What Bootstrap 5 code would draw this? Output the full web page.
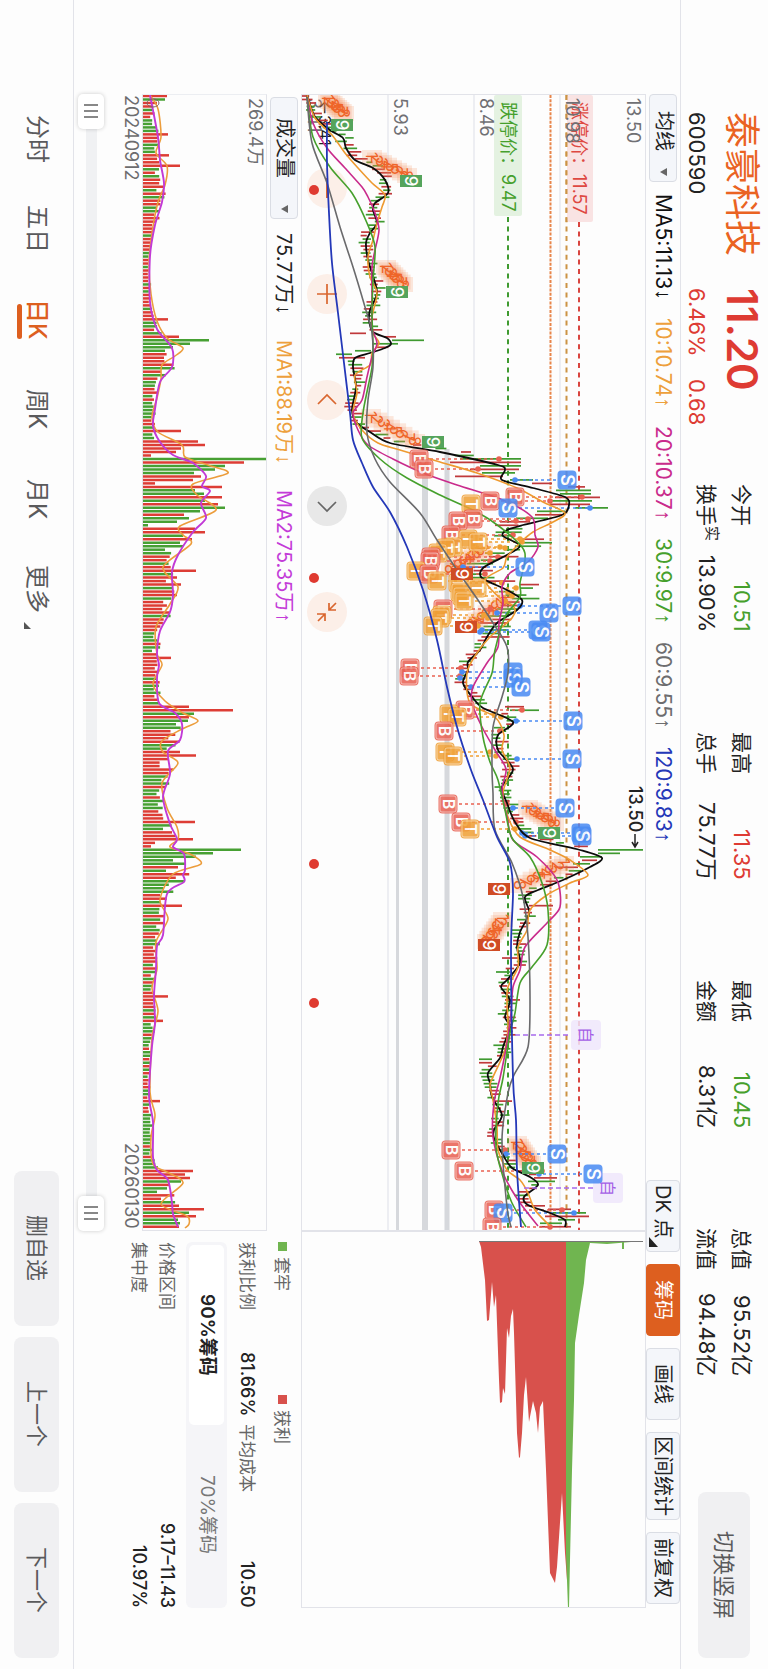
<!DOCTYPE html>
<html lang="zh-CN">
<head>
<meta charset="utf-8">
<meta name="viewport" content="width=device-width, initial-scale=1">
<title>泰豪科技 600590</title>
<link rel="stylesheet" href="https://cdn.jsdelivr.net/npm/bootstrap@5.3.0/dist/css/bootstrap.min.css">
<style>
  :root { --up:#de3b33; --down:#46a02c; --brand:#dd5f1f; --rule:#e2e3e9; --ink:#222; --soft:#5a5a5c; }
  body { background:#fdfdfd; color:var(--ink); font-family:Inter,"Noto Sans CJK SC",sans-serif; font-size:22px; line-height:1.2; }
  /* landscape screen held upright: lines run top to bottom, blocks right to left */
  .screen { writing-mode:vertical-rl; text-orientation:sideways; width:100%; min-height:100vh; white-space:nowrap; }
  .screen svg { writing-mode:horizontal-tb; display:block; }
  .screen button, .screen select { writing-mode:vertical-rl; text-orientation:sideways; font-family:inherit; }
  .up { color:var(--up); } .down { color:var(--down); }
  .arrow { font-family:"Liberation Sans",sans-serif; }

  .quote-bar { width:88px; padding:112px 8px 11px 0; border-left:1px solid var(--rule); }
  .quote { height:372px; padding-right:1px; }
  .quote-line > :first-child { height:176px; }
  .quote-line { column-gap:0; }
  .change { gap:22px; }
  .stock-name { font-size:36px; color:#ea6322; }
  .last-price { font-size:42px; font-weight:600; }
  .quote-main { width:34px; line-height:34px; }
  .quote-sub { width:28px; line-height:28px; margin-right:14px; }
  .stats { display:grid; grid-template-columns:repeat(4,148px); column-gap:100px; padding-right:3px; align-content:start; row-gap:4px; font-size:21px; }
  .stats > div { width:31px; line-height:31px; }
  .stats b { font-weight:400; font-size:22px; }
  .stats sup { font-size:15px; top:0; vertical-align:8px; line-height:0; }
  .soft-btn { background:#f0f0f2; color:var(--soft); border:0; border-radius:8px; font-size:22px; padding:0; height:155px; }
  .soft-btn:hover { background:#e6e6e9; }
  .switch-btn { width:52px; height:166px; margin:auto 10px 0 0; }

  .tool-row { width:34px; padding:94px 0 61px; }
  .pick { appearance:none; border:1px solid #dadde4; border-radius:4px; background:#f4f6fa; color:var(--ink); font-size:20px; line-height:1.2; width:28px; padding:16px 0 6px; }
  .pick-wrap::after { content:""; position:absolute; bottom:6px; left:11px; border:4px solid transparent; border-right:7px solid #666; border-left:0; pointer-events:none; }
  .ma-list { font-size:21px; height:648px; margin-top:12px; }
  .tools { gap:12px; padding-bottom:4px; }
  .tool { min-height:72px; width:34px; padding:3px 0; font-size:20px; line-height:1.2; border:1px solid #dadde4; border-radius:4px; background:#f4f6fa; color:var(--ink); }
  .tool.chosen { background:var(--brand); border-color:var(--brand); color:#fff; }
  .tool.has-menu { padding-bottom:12px; }
  .corner { position:absolute; bottom:4px; left:2px; border-bottom:10px solid #222; border-right:9px solid transparent; }

  .main { display:grid; grid-template-columns:1137fr 378fr; padding:94px 0 61px; flex:1 1 auto; min-width:0; }
  .plot { width:345px; border:1px solid var(--rule); }
  .plot svg { width:100%; height:100%; position:relative; pointer-events:none; }
  .plot text { font-family:Inter,"Noto Sans CJK SC",sans-serif; }
  .orbs { position:absolute; top:73px; left:5px; gap:66px; }
  .orb { width:40px; height:40px; border:0; padding:0; border-radius:50%; background:#fcefe8; color:#d9662e; }
  .orb.end { background:#e8e8e8; color:#666; }
  .orb svg { width:40px; height:40px; }
  .vol-row { width:34px; gap:14px; padding-top:3px; }
  .vol-row .pick { padding:20px 0 40px; }
  .vol-values { font-size:20px; gap:26px; }
  .ma-row .pick { padding:16px 0 30px; }
  .vol-plot { width:125px; border:1px solid var(--rule); border-top-color:#eceef2; }
  .dates { width:20px; line-height:20px; font-size:18px; color:#6c6c6e; margin-right:1px; padding:1px 0 2px; }

  .span-range { width:26px; margin-right:17px; }
  .span-range::before { content:""; position:absolute; inset:0 7px 0 8px; background:#f0f1f3; }
  .span-range input { position:absolute; inset:0; width:26px; height:100%; margin:0; appearance:none; background:none; writing-mode:vertical-lr; pointer-events:none; }
  .span-range input::-webkit-slider-thumb { appearance:none; pointer-events:auto; width:26px; height:35px; border:0; border-radius:5px; box-shadow:0 0 4px #0003;
    background:linear-gradient(#888,#888) 50% 10px/14px 2px no-repeat, linear-gradient(#888,#888) 50% 16px/14px 2px no-repeat, linear-gradient(#888,#888) 50% 22px/14px 2px no-repeat, #fff; }

  .chips { padding:11px 0 0; font-size:17px; color:#666; }
  .legend-row { width:28px; margin-right:5px; }
  .legend-row > span { height:153px; gap:6px; }
  .swatch { width:9px; height:9px; }
  .swatch.held { background:#70b550; } .swatch.gain { background:#d8514c; }
  .fact { width:28px; font-size:17px; }
  .fact b { font-weight:500; font-size:18px; color:#222; }
  .fact-pair { width:28px; display:grid; grid-template-columns:180fr 190fr; column-gap:8px; margin-right:7px; }
  .seg { width:41px; margin:0 6px 0 5px; padding:3px; background:#f5f5f8; border-radius:6px; }
  .seg button { flex:1 1 0; border:0; padding:0; background:none; color:#777; font-size:19px; border-radius:5px; }
  .seg button.chosen { background:#fff; color:#222; font-weight:600; }

  .foot { width:74px; border-right:1px solid var(--rule); padding:94px 0 11px; }
  .actions { gap:11px; }
  .actions .soft-btn { width:45px; }
  .period { height:90px; width:44px; font-size:24px; color:var(--soft); text-decoration:none; position:relative; }
  .period.chosen { color:var(--brand); font-weight:500; }
  .period.chosen::after { content:""; position:absolute; left:2px; top:30px; width:5px; height:35px; border-radius:3px; background:var(--brand); }
  .more::after { content:""; position:absolute; left:9px; bottom:5px; border-bottom:7px solid #555; border-right:7px solid transparent; }
</style>
</head>
<body>
<div class="screen d-flex flex-column">

  <header class="quote-bar d-flex align-items-start">
    <div class="quote d-flex flex-column">
      <div class="quote-line quote-main d-flex"><span class="stock-name">泰豪科技</span><span class="last-price up">11.20</span></div>
      <div class="quote-line quote-sub d-flex"><span>600590</span><span class="change up d-flex"><span>6.46%</span><span>0.68</span></span></div>
    </div>
    <div class="stats">
      <div class="d-flex justify-content-between"><span>今开</span><b class="down">10.51</b></div>
      <div class="d-flex justify-content-between"><span>最高</span><b class="up">11.35</b></div>
      <div class="d-flex justify-content-between"><span>最低</span><b class="down">10.45</b></div>
      <div class="d-flex justify-content-between"><span>总值</span><b>95.52亿</b></div>
      <div class="d-flex justify-content-between"><span>换手<sup>实</sup></span><b>13.90%</b></div>
      <div class="d-flex justify-content-between"><span>总手</span><b>75.77万</b></div>
      <div class="d-flex justify-content-between"><span>金额</span><b>8.31亿</b></div>
      <div class="d-flex justify-content-between"><span>流值</span><b>94.48亿</b></div>
    </div>
    <button class="soft-btn switch-btn" type="button">切换竖屏</button>
  </header>

  <div class="tool-row ma-row d-flex justify-content-between align-items-center">
    <div class="d-flex align-items-center">
      <div class="pick-wrap position-relative"><select class="pick" aria-label="主图指标"><option>均线</option></select></div>
      <div class="ma-list d-flex justify-content-between">
        <span style="color:#111">MA5:11.13<span class="arrow">↓</span></span>
        <span style="color:#eda03c">10:10.74<span class="arrow">↑</span></span>
        <span style="color:#c92b8c">20:10.37<span class="arrow">↑</span></span>
        <span style="color:#46a02c">30:9.97<span class="arrow">↑</span></span>
        <span style="color:#6d6d6f">60:9.55<span class="arrow">↑</span></span>
        <span style="color:#2438b8">120:9.83<span class="arrow">↑</span></span>
      </div>
    </div>
    <div class="tools d-flex">
      <button class="tool has-menu position-relative" type="button">DK 点<i class="corner"></i></button>
      <button class="tool chosen" type="button">筹码</button>
      <button class="tool" type="button">画线</button>
      <button class="tool" type="button">区间统计</button>
      <button class="tool" type="button">前复权</button>
    </div>
  </div>

  <main class="main">
    <section class="d-flex flex-column">
      <div class="plot position-relative">
        <div class="orbs d-flex">
          <button class="orb" type="button" aria-label="缩小"><svg viewBox="0 0 40 40"><path d="M20 10v20" stroke="currentColor" stroke-width="2"/></svg></button>
          <button class="orb" type="button" aria-label="放大"><svg viewBox="0 0 40 40"><path d="M20 10v20M10 20h20" stroke="currentColor" stroke-width="1.7"/></svg></button>
          <button class="orb" type="button" aria-label="左移"><svg viewBox="0 0 40 40"><path d="M11 24l9-9 9 9" fill="none" stroke="currentColor" stroke-width="1.7"/></svg></button>
          <button class="orb end" type="button" aria-label="右移"><svg viewBox="0 0 40 40"><path d="M11 16l9 9 9-9" fill="none" stroke="currentColor" stroke-width="1.7"/></svg></button>
          <button class="orb" type="button" aria-label="退出全屏"><svg viewBox="0 0 40 40"><path d="M29 11l-7 7m0-7v7h7M11 29l7-7m-8 0h8v7" fill="none" stroke="currentColor" stroke-width="1.7"/></svg></button>
        </div>
        <svg id="price" viewBox="302 95 343 1135"></svg>
      </div>
      <div class="vol-row d-flex align-items-center">
        <div class="pick-wrap position-relative"><select class="pick" aria-label="副图指标"><option>成交量</option></select></div>
        <div class="vol-values d-flex">
          <span>75.77万<span class="arrow">↓</span></span>
          <span style="color:#eda03c">MA1:88.19万<span class="arrow">↓</span></span>
          <span style="color:#c33bd8">MA2:75.35万<span class="arrow">↑</span></span>
        </div>
      </div>
      <div class="vol-plot"><svg id="volume" viewBox="143 95 123 1135" width="100%" height="100%"></svg></div>
      <div class="dates d-flex justify-content-between"><span>20240912</span><span>20260130</span></div>
      <div class="span-range position-relative">
        <input type="range" min="0" max="100" value="0" aria-label="起始日期">
        <input type="range" min="0" max="100" value="100" aria-label="结束日期">
      </div>
    </section>
    <section class="d-flex flex-column">
      <div class="plot"><svg id="chip" viewBox="302 1232 343 375"></svg></div>
      <div class="chips d-flex flex-column">
        <div class="legend-row d-flex">
          <span class="d-flex align-items-center"><i class="swatch held"></i>套牢</span>
          <span class="d-flex align-items-center"><i class="swatch gain"></i>获利</span>
        </div>
        <div class="fact-pair">
          <div class="fact d-flex justify-content-between align-items-center"><span>获利比例</span><b>81.66%</b></div>
          <div class="fact d-flex justify-content-between align-items-center"><span>平均成本</span><b>10.50</b></div>
        </div>
        <div class="seg d-flex"><button class="chosen" type="button">90%筹码</button><button type="button">70%筹码</button></div>
        <div class="fact d-flex justify-content-between align-items-center"><span>价格区间</span><b>9.17–11.43</b></div>
        <div class="fact d-flex justify-content-between align-items-center"><span>集中度</span><b>10.97%</b></div>
      </div>
    </section>
  </main>

  <footer class="foot d-flex justify-content-between align-items-center">
    <nav class="periods d-flex">
      <a class="period d-flex align-items-center justify-content-center" href="#">分时</a>
      <a class="period d-flex align-items-center justify-content-center" href="#">五日</a>
      <a class="period chosen d-flex align-items-center justify-content-center" href="#">日K</a>
      <a class="period d-flex align-items-center justify-content-center" href="#">周K</a>
      <a class="period d-flex align-items-center justify-content-center" href="#">月K</a>
      <a class="period more d-flex align-items-center justify-content-center" href="#">更多</a>
    </nav>
    <div class="actions d-flex">
      <button class="soft-btn" type="button">删自选</button>
      <button class="soft-btn" type="button">上一个</button>
      <button class="soft-btn" type="button">下一个</button>
    </div>
  </footer>
</div>

<script src="https://cdn.jsdelivr.net/npm/bootstrap@5.3.0/dist/js/bootstrap.bundle.min.js"></script>
<script>
const RED = '#c0393b', GREEN = '#3f9a30', STEP = 3.49, DAYS = 325;
let seed = 11;
const rnd = () => (seed = (seed * 16807) % 2147483647) / 2147483647;
const pts = s => s.trim().split(/\s+/).map(p => p.split(',').map(Number));

// Price (x) at a given time position (y), linear between samples
function at(line, y) {
  for (let i = 1; i < line.length; i++) if (line[i][1] >= y) {
    const [a, b] = [line[i - 1], line[i]];
    return a[0] + (b[0] - a[0]) * (y - a[1]) / ((b[1] - a[1]) || 1);
  }
  return line[line.length - 1][0];
}
function curve(p, color, w = 1.6) {
  let d = `M${p[0]}`;
  for (let i = 0; i < p.length - 1; i++) {
    const a = p[i - 1] || p[i], b = p[i], c = p[i + 1], e = p[i + 2] || c;
    d += `C${(b[0] + (c[0] - a[0]) / 7).toFixed(1)} ${(b[1] + (c[1] - a[1]) / 7).toFixed(1)} ${(c[0] - (e[0] - b[0]) / 7).toFixed(1)} ${(c[1] - (e[1] - b[1]) / 7).toFixed(1)} ${c}`;
  }
  return `<path d="${d}" fill="none" stroke="${color}" stroke-width="${w}"/>`;
}
const seg = (x1, x2, y, c, w = 1.3, dash = '') => `<path d="M${x1} ${y}H${x2}" stroke="${c}" stroke-width="${w}" stroke-dasharray="${dash}"/>`;
const level = (x, y1, c, w, dash = '', y2 = 1230) => `<path d="M${x} ${y1}V${y2}" stroke="${c}" stroke-width="${w}" stroke-dasharray="${dash}"/>`;
// Text that runs downwards; x is the baseline, y the start
const down = (x, y, t, size, c, extra = '') => `<text transform="translate(${x} ${y}) rotate(90)" font-size="${size}" fill="${c}" ${extra}>${t}</text>`;

const ma5 = pts(`307,95 315,117 330,130 343,138 346,148 355,160 373,168 385,180 388,193 375,203 373,210 377,223 370,233 366,243 368,260 372,273 377,293 370,310 369,320 373,332 387,338 391,344 385,348 370,353 355,358 353,367 356,387 352,410 357,423 370,432 390,443 440,452 498,465 505,470 502,480 533,488 565,497 569,505 562,515 523,525 507,530 503,536 520,546 503,557 483,568 482,578 507,590 522,600 517,610 497,623 487,637 480,650 468,662 468,670 463,683 473,698 483,708 513,722 498,735 498,750 513,769 502,787 507,803 515,822 530,838 580,850 602,858 590,867 563,880 538,890 525,897 529,910 528,917 520,932 517,947 520,963 507,980 501,987 510,1000 505,1017 510,1027 503,1047 500,1058 488,1073 490,1083 492,1097 502,1115 494,1130 494,1138 503,1155 512,1168 530,1177 538,1185 524,1197 528,1205 550,1213 565,1220 565,1227`);
const ma10 = pts(`307,95 315,118 332,135 345,153 358,168 372,183 385,195 382,207 377,223 373,240 368,257 370,277 377,293 372,317 373,333 379,343 372,353 370,365 355,375 357,393 353,413 362,430 378,443 400,450 440,462 477,473 517,488 543,502 565,513 553,522 533,532 520,543 507,557 503,568 485,580 500,598 514,607 512,618 490,637 477,653 467,673 470,703 495,717 504,735 502,750 510,768 503,793 508,817 520,837 550,850 570,860 588,875 570,883 547,895 530,910 527,930 518,947 518,967 508,987 507,1003 508,1027 505,1050 493,1077 490,1085 493,1100 497,1127 498,1150 507,1170 520,1180 528,1193 535,1210 550,1226`);
const ma20 = pts(`307,97 313,123 327,148 345,168 362,187 368,197 375,213 379,230 375,250 372,267 372,293 372,327 377,343 372,357 367,377 362,400 353,413 358,430 368,445 393,459 423,473 457,485 503,500 532,517 535,535 538,547 528,562 510,573 502,587 503,603 499,623 498,647 487,663 473,687 472,703 482,727 495,750 506,769 502,790 507,817 513,840 537,857 557,880 560,907 547,923 525,947 520,970 513,987 511,1013 507,1043 500,1078 494,1103 493,1137 503,1173 518,1200 538,1226`);
const ma30 = pts(`307,97 313,137 330,167 352,193 367,223 375,247 373,280 372,313 373,347 372,367 368,387 363,413 362,438 380,459 407,478 440,495 477,512 500,527 522,547 525,560 520,583 520,597 505,617 495,650 492,673 480,703 483,737 490,762 498,780 505,810 512,838 530,857 542,883 548,910 547,945 532,967 520,983 515,1013 510,1033 503,1078 498,1103 496,1147 503,1177 512,1203 526,1227`);
const ma60 = pts(`307,97 312,143 327,183 340,227 353,267 365,307 372,333 373,367 368,400 367,433 375,459 390,482 420,513 437,540 457,570 480,603 493,623 507,647 508,673 502,697 493,727 492,768 493,793 495,830 512,863 523,897 528,937 530,997 528,1047 514,1075 508,1093 502,1140 507,1207 511,1227`);
const ma120 = pts(`327,122 327,163 329,213 332,263 338,313 344,363 350,413 353,440 362,463 373,487 390,512 407,547 423,590 437,640 447,687 457,727 471,770 483,800 497,837 510,863 513,893 511,950 513,1078 516,1120 517,1170 521,1227`);

/* ---------- price chart ---------- */
let s = '';
[388, 474, 560].forEach(x => s += level(x, 95, '#e3e4ec', 1.2));
s += level(397.5, 440, '#d6d8dc', 3) + level(425, 455, '#d6d8dc', 6) + level(447, 449, '#d6d8dc', 5);
s += level(550.5, 95, '#e8854a', 2, '3 1.3') + level(566.5, 95, '#cc9345', 2, '5 4.4');

// price tags
s += '<rect x="494" y="95" width="28" height="121" rx="2" fill="#e4f2e1"/><rect x="567" y="95" width="26" height="127" rx="2" fill="#f9e3e3"/>';
s += level(566.5, 95, '#cc9345', 2, '5 4.4', 222);
s += level(508, 217, GREEN, 2, '5 4.4') + level(579, 222, '#d9453f', 2, '5 4.4');
s += down(502, 102, '跌停价：9.47', 18, '#46a02c') + down(573, 102, '涨停价：11.57', 18, '#de4841');
[[627, '13.50'], [566, '10.98'], [480, '8.46'], [394, '5.93'], [308, '3.41']].forEach(([x, t]) => s += down(x, 98, t, 18, '#707074'));
s += down(319, 100, '←3.41', 16, '#222');

// daily candles as low–high strokes
const candle = {};
`333,350,366,r 337,384,396,r 340,392,424,g 344,372,398,g 351,355,371,g 354,336,352,g 358,339,365,r 452,461,471,r 459,460,521,g 463,450,521,r 466,480,521,g 470,470,519,r 473,482,515,g 477,455,503,r 480,510,533,g 484,532,552,r 487,568,585,r 491,556,591,g 494,560,591,g 498,555,600,r 501,550,592,g 505,550,590,r 508,575,608,g 512,537,565,g 515,535,562,r 519,516,548,g 522,500,530,r 540,520,544,r 543,520,552,g 586,520,539,r 589,520,533,g 669,456,468,r 708,505,524,r 711,510,539,g 850,598,643,g 853,598,620,g 857,580,602,g 861,582,597,r 864,573,590,g 868,555,578,r 906,529,553,r 959,502,520,r 973,496,510,g 1000,505,520,r 1060,479,492,g 1063,479,492,r 1101,495,512,r 1178,534,557,r 1182,528,555,g 1206,525,545,r 1210,548,571,r 1213,550,586,g 1217,545,589,r 1220,558,575,g 1223,540,562,g 1227,540,571,r`
  .split(/\s+/).forEach(r => { const [y, a, b, c] = r.split(','); candle[Math.round((y - 96) / STEP)] = [+a, +b, c]; });
for (let i = 0; i < DAYS; i++) {
  const y = 96 + i * STEP, m = at(ma5, y), trend = at(ma5, y + 3) - at(ma5, y - 3);
  const big = y > 450 && y < 640, c = candle[i];
  const mid = m + trend * .5 + (rnd() - .5) * (big ? 22 : 8), half = (big ? 6 : 3) + rnd() * (big ? 9 : 4);
  const up = rnd() < .5;
  s += c ? seg(c[0], c[1], y, c[2] === 'r' ? RED : GREEN, 1.7) : seg((mid - half).toFixed(1), (mid + half).toFixed(1), y, up ? RED : GREEN, 1.7);
}

// nine-turn counters
const counts = [[325,98,341,112],[369,156,404,174],[383,266,400,283],[368,415,412,440],[480,548,448,568],[504,597,470,622],[525,806,551,822],[561,862,517,884],[500,918,484,940],[514,1142,528,1162]];
counts.forEach(([x1, y1, x2, y2]) => {
  for (let i = 0; i < 8; i++) {
    const x = x1 + (x2 - x1) * i / 7, y = y1 + (y2 - y1) * i / 7;
    s += `<rect x="${(x - 7).toFixed(1)}" y="${(y - 6).toFixed(1)}" width="20" height="15" fill="#f58a55" opacity=".2"/>`;
  }
  for (let i = 0; i < 8; i++) s += down((x1 + (x2 - x1) * i / 7 - 3).toFixed(1), (y1 + (y2 - y1) * i / 7 - 4).toFixed(1), i + 1, 16, '#ef6428');
});

// trade marks: letter, badge x, y, dot x
const marks = `B,419,459,499 B,424,469,478 S,567,480,515 T,471,504,0 B,515,497,582 B,490,501,550 S,508,508,590 B,473,519,528 B,458,521,516 B,451,535,513 T,468,539,520 T,478,542,522 T,453,547,500 T,446,548,505 T,438,553,490 B,431,557,498 B,430,561,490 T,416,571,0 B,429,574,485 T,437,581,484 S,525,567,463 T,458,583,502 T,477,588,516 T,460,592,508 T,462,596,512 T,464,601,505 B,443,609,490 T,442,615,484 T,440,618,488 T,433,626,478 S,549,613,497 S,572,606,520 S,538,630,482 S,541,632,480 B,410,668,461 B,409,676,460 S,513,672,462 S,513,678,460 S,521,687,471 B,465,710,522 T,449,714,495 T,457,717,501 S,573,721,516 B,444,731,500 T,445,752,490 T,453,756,496 S,572,759,517 B,448,804,507 S,565,808,513 B,461,822,516 T,470,829,515 S,581,833,522 S,582,836,525 B,451,1150,505 S,557,1154,506 B,464,1171,542 B,494,1210,562 S,503,1213,574 B,492,1227,550 S,593,1174,539`.split(/\s+/).map(r => r.split(','));
const tone = { B: '#e96152', S: '#4a8bf3', T: '#f0a036' };
marks.forEach(([k, x, y, dot]) => {
  if (+dot) s += seg(+x + (+dot > +x ? 11 : -11), dot, y, tone[k], 1.5, '3 3') + `<circle cx="${dot}" cy="${y}" r="2.8" fill="${tone[k]}"/>`;
});
const badge = ([k, x, y]) => `<g opacity=".86"><rect x="${x - 9.5}" y="${y - 9.5}" width="19" height="19" rx="4" fill="${tone[k]}"/>` +
  (k === 'S' ? '' : `<rect x="${x - 8}" y="${y - 8}" width="16" height="16" rx="2" fill="none" stroke="#fff" stroke-opacity=".5"/>`) +
  down(x - (k === 'S' ? 6.5 : 5.5), y, k, k === 'S' ? 18 : 16, '#fff', 'text-anchor="middle" font-weight="600"') + '</g>';
s += curve(ma5, '#0c0c0c', 1.8) + curve(ma10, '#ee9a30') + curve(ma20, '#c92b8c') + curve(ma30, '#46a02c');
marks.forEach((m, i) => { if (i < marks.length - 1) s += badge(m); });
s += curve(ma60, '#6a6a6c') + curve(ma120, '#2438b8', 1.8);

[[342,125],[411,181],[397,292],[433,442],[462,574,1],[466,627,1],[549,833],[499,889,1],[489,945,1],[533,1168]].forEach(([x, y, sell]) =>
  s += `<rect x="${x - 11}" y="${y - 6}" width="22" height="12" fill="${sell ? '#d04c25' : '#55a45c'}"/>` + down(x - 6, y, 9, 17, '#fff', 'text-anchor="middle" font-weight="500"'));

// watch-list marks, the latest sell mark lies over the second one
[[586,1035,515],[608,1188,524]].forEach(([x, y, from]) =>
  s += seg(from, x - 15, y, '#a76aec', 1.7, '5 3') + `<rect x="${x - 15}" y="${y - 15}" width="30" height="30" rx="4" fill="#efe6fc" opacity=".85"/>` + down(x - 6, y, '自', 16, '#a45fe6', 'text-anchor="middle"'));
s += badge(marks[marks.length - 1]);
s += down(629, 786, '13.50', 18, '#222', 'font-weight="500"') + '<path d="M635 834v13m-3-5l3 5 3-5" fill="none" stroke="#222" stroke-width="1.5"/>';
[190, 578, 864, 1003].forEach(y => s += `<circle cx="314" cy="${y}" r="5" fill="#df3a30"/>`);
document.getElementById('price').innerHTML = s;

/* ---------- volume chart ---------- */
const v2 = pts(`150,95 158,137 160,160 164,183 162,202 155,225 150,256 150,302 157,329 172,348 172,367 160,382 155,409 153,426 160,442 173,455 193,463 206,476 202,486 210,491 201,503 206,518 193,532 178,555 172,572 173,595 170,612 160,631 157,654 159,665 157,678 159,703 175,713 182,724 180,740 168,751 170,774 163,797 170,824 177,839 173,847 184,854 185,870 183,875 184,882 167,894 163,935 157,946 156,969 154,996 155,1023 152,1046 149,1095 153,1122 153,1157 157,1170 168,1180 172,1203 173,1214 178,1227`);
const v1 = pts(`150,95 158,109 161,137 156,153 167,166 165,185 158,202 152,233 149,264 151,294 157,321 167,338 183,348 175,356 162,365 161,379 157,398 152,417 158,432 182,445 185,457 208,465 228,473 193,484 197,495 216,510 180,526 183,535 191,544 163,567 178,587 170,604 156,627 157,654 162,665 153,684 165,701 183,713 198,721 182,729 162,741 163,752 178,763 162,783 167,808 177,827 178,839 170,847 190,854 201,864 173,874 160,900 168,919 156,942 157,969 152,988 158,1011 152,1038 150,1092 155,1115 151,1137 153,1164 167,1172 183,1183 161,1204 187,1216 189,1224 185,1228`);
const vol = {};
`96,24,r 99,22,g 103,14,r 134,25,r 155,26,r 166,37,r 319,25,r 337,36,r 341,66,g 344,47,g 348,30,g 351,22,g 431,38,r 442,55,r 445,62,r 449,38,r 452,33,r 456,8,r 459,123,g 463,101,r 466,82,g 470,72,g 473,51,g 477,58,r 480,50,r 484,12,r 487,79,r 491,52,g 494,61,g 498,79,r 501,62,g 505,75,r 508,82,g 512,57,g 515,41,r 519,46,g 522,34,g 526,5,g 529,52,r 532,62,r 536,40,g 540,49,r 543,37,g 547,40,g 550,22,g 571,53,r 585,38,r 658,28,r 707,46,r 710,90,r 714,51,g 717,46,r 721,45,g 724,33,g 752,37,r 756,53,r 822,52,r 839,50,r 843,12,r 846,8,r 850,98,g 853,70,g 857,53,g 861,30,g 864,42,g 868,35,r 871,23,g 906,39,r 997,25,r 1021,20,r 1101,17,r 1171,50,r 1175,42,r 1178,47,r 1182,38,g 1185,27,r 1189,24,g 1192,14,g 1206,36,r 1209,61,r 1213,46,g 1216,53,r 1220,35,g 1223,37,g 1227,36,r`
  .split(/\s+/).forEach(r => { const [y, n, c] = r.split(','); vol[Math.round((y - 96) / STEP)] = [+n, c]; });
let v = '';
for (let i = 0; i < DAYS; i++) {
  const y = 96 + i * STEP, len = (at(v2, y) - 143) * (.62 + rnd() * .55), up = rnd() < .52;
  const [n, c] = vol[i] || [len, up ? 'r' : 'g'];
  v += seg(143, (143 + n).toFixed(1), y, c === 'r' ? '#dd3d35' : '#47a033', 2.5);
}
v += curve(v1, '#ec9d3c', 1.6) + curve(v2, '#c23ad6', 1.9) + down(249, 98, '269.4万', 18, '#6f6f72');
v += '<ellipse cx="153" cy="103" rx="6" ry="4" fill="none" stroke="#806060"/>';
document.getElementById('volume').innerHTML = v;

/* ---------- chip distribution ---------- */
document.getElementById('chip').innerHTML =
  '<path fill="#d8514c" d="M479 1241L481 1247 485 1280 487 1321 489 1320 492 1282 494 1307 496 1295 499 1380 500 1403 502 1402 503 1388 505 1394 507 1328 509 1338 511 1316 513 1309 514 1333 517 1433 519 1458 520 1457 522 1433 524 1395 526 1377 529 1422 533 1401 536 1413 538 1433 540 1407 543 1401 546 1470 550 1573 555 1583 557 1567 562 1493 565 1553 567 1580V1241Z"/>' +
  '<path fill="#70b550" d="M566 1241V1553L568 1608H569L570 1560 572 1470 574 1400 575 1343 579 1315 584 1283 586 1260 590 1243 607 1244 643 1241Z"/><path d="M479 1241.500H643" stroke="#777" stroke-width="1"/><path d="M623 1242v7" stroke="#70b550" stroke-width="2"/>';
</script>
</body>
</html>
